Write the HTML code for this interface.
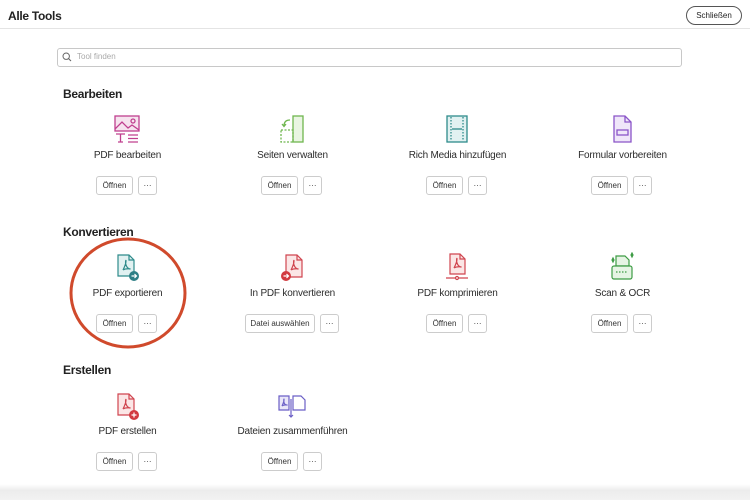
<!DOCTYPE html>
<html><head><meta charset="utf-8"><style>
*{margin:0;padding:0;box-sizing:border-box}
body{width:750px;height:500px;background:#fff;font-family:"Liberation Sans",sans-serif;color:#222;position:relative;overflow:hidden}
.a{position:absolute}
.h{font-weight:bold;font-size:12px;letter-spacing:-0.3px}
.lbl{position:absolute;width:165px;text-align:center;font-size:10px;color:#2c2c2c;letter-spacing:-0.2px}
.btn{position:absolute;height:19px;border:1px solid #ccc;border-radius:3px;font-size:8px;line-height:17px;text-align:center;color:#333;background:#fff}
.ic{position:absolute;width:30px;height:30px}
</style></head><body>
<div class="a h" style="left:8px;top:9px;font-size:12px">Alle Tools</div>
<div class="a" style="left:686px;top:6px;width:56px;height:19px;border:1px solid #555;border-radius:10px;font-size:8px;line-height:17px;text-align:center">Schließen</div>
<div class="a" style="left:0;top:28px;width:750px;height:1px;background:#e4e4e4"></div>
<div class="a" style="left:57px;top:48px;width:625px;height:19px;border:1px solid #c8c8c8;border-radius:3px"></div>
<svg class="a" style="left:62px;top:52px" width="10" height="10" viewBox="0 0 10 10"><circle cx="4.2" cy="4.2" r="3.2" fill="none" stroke="#666" stroke-width="1"/><path d="M6.5 6.5L9 9" stroke="#666" stroke-width="1.1"/></svg>
<div class="a" style="left:77px;top:52px;font-size:8px;color:#aaa">Tool finden</div>

<div class="a h" style="left:63px;top:87px">Bearbeiten</div>
<div class="a h" style="left:63px;top:225px">Konvertieren</div>
<div class="a h" style="left:63px;top:363px">Erstellen</div>

<svg class="ic" style="left:112px;top:114px" viewBox="0 0 30 30" fill="none" stroke="#c0408f" stroke-width="1.3"><rect x="3" y="2" width="24" height="15" fill="#f6e3ee"/><path d="M3 15l7-7 6 6 4-3 7 5"/><circle cx="21" cy="7" r="2"/><path d="M4 20h9M8.5 20v8M6 28h5M16 21h10M16 24.5h10M16 28h10"/></svg>
<svg class="ic" style="left:277px;top:114px" viewBox="0 0 30 30" fill="none" stroke="#6fb64f" stroke-width="1.3"><rect x="16" y="2" width="10" height="26" fill="#e9f5e2"/><rect x="4" y="16" width="12" height="12" stroke-dasharray="2 1.5"/><path d="M13 6c-4 0-6 2-6 6M5 10l2 2.5 2-2.5"/></svg>
<svg class="ic" style="left:442px;top:114px" viewBox="0 0 30 30" fill="none" stroke="#2e8b8b" stroke-width="1.3"><rect x="5" y="2" width="20" height="26" fill="#e1f1f1"/><path d="M9 3v24M21 3v24" stroke-dasharray="1.5 1.5"/><path d="M10 15h10"/></svg>
<svg class="ic" style="left:607px;top:114px" viewBox="0 0 30 30" fill="none" stroke="#8a55c8" stroke-width="1.3"><path d="M7 2h11l6 6v20H7z" fill="#efe6f9"/><path d="M18 2v6h6"/><rect x="10" y="16" width="11" height="5"/></svg>

<div class="lbl" style="left:45px;top:150px">PDF bearbeiten</div>
<div class="lbl" style="left:210px;top:150px">Seiten verwalten</div>
<div class="lbl" style="left:375px;top:150px">Rich Media hinzufügen</div>
<div class="lbl" style="left:540px;top:150px">Formular vorbereiten</div>

<div class="btn" style="left:96px;top:176px;width:37px">Öffnen</div><div class="btn" style="left:138px;top:176px;width:19px">···</div>
<div class="btn" style="left:261px;top:176px;width:37px">Öffnen</div><div class="btn" style="left:303px;top:176px;width:19px">···</div>
<div class="btn" style="left:426px;top:176px;width:37px">Öffnen</div><div class="btn" style="left:468px;top:176px;width:19px">···</div>
<div class="btn" style="left:591px;top:176px;width:37px">Öffnen</div><div class="btn" style="left:633px;top:176px;width:19px">···</div>

<svg class="ic" style="left:112px;top:252px" viewBox="0 0 30 30" fill="none" stroke="#2e8b8b" stroke-width="1.2"><path d="M6 3h11l5 5v16H6z" fill="#e1f1f1"/><path d="M17 3v5h5"/><path d="M11 18c2-4 3-7 3-9s-1 1 0 4 3 4 4 4-4-1-7 1"/><circle cx="22" cy="24" r="5" fill="#2e7f86" stroke="none"/><path d="M19.5 24h4.5M22.5 22l2 2-2 2" stroke="#fff"/></svg>
<svg class="ic" style="left:277px;top:252px" viewBox="0 0 30 30" fill="none" stroke="#d0454f" stroke-width="1.2"><path d="M9 3h11l5 5v17H9z" fill="#fbe6e6"/><path d="M20 3v5h5"/><path d="M14 18c2-4 3-7 3-9s-1 1 0 4 3 4 4 4-4-1-7 1"/><circle cx="9" cy="24" r="5" fill="#d23a3f" stroke="none"/><path d="M6.5 24h4.5M9.5 22l2 2-2 2" stroke="#fff"/></svg>
<svg class="ic" style="left:442px;top:252px" viewBox="0 0 30 30" fill="none" stroke="#d0454f" stroke-width="1.2"><path d="M8 2h10l5 5v15H8z" fill="#fbe6e6"/><path d="M18 2v5h5"/><path d="M12 16c2-4 3-7 3-9s-1 1 0 4 3 4 4 4-4-1-7 1"/><path d="M4 26h22"/><circle cx="15" cy="26" r="1.5" fill="#fff"/></svg>
<svg class="ic" style="left:607px;top:252px" viewBox="0 0 30 30" fill="none" stroke="#3e9c45" stroke-width="1.2"><path d="M9 4h9l4 4v6H9z" fill="#e6f4e4"/><rect x="5" y="14" width="20" height="13" rx="2" fill="#e6f4e4"/><path d="M9 20h12" stroke-dasharray="1.5 1.5"/><path d="M5 8l1-2 1 2-1 2zM24 3l1-2 1 2-1 2z" fill="#3e9c45"/></svg>

<div class="lbl" style="left:45px;top:288px">PDF exportieren</div>
<div class="lbl" style="left:210px;top:288px">In PDF konvertieren</div>
<div class="lbl" style="left:375px;top:288px">PDF komprimieren</div>
<div class="lbl" style="left:540px;top:288px">Scan &amp; OCR</div>

<div class="btn" style="left:96px;top:314px;width:37px">Öffnen</div><div class="btn" style="left:138px;top:314px;width:19px">···</div>
<div class="btn" style="left:245px;top:314px;width:70px">Datei auswählen</div><div class="btn" style="left:320px;top:314px;width:19px">···</div>
<div class="btn" style="left:426px;top:314px;width:37px">Öffnen</div><div class="btn" style="left:468px;top:314px;width:19px">···</div>
<div class="btn" style="left:591px;top:314px;width:37px">Öffnen</div><div class="btn" style="left:633px;top:314px;width:19px">···</div>

<svg class="ic" style="left:112px;top:391px" viewBox="0 0 30 30" fill="none" stroke="#d0454f" stroke-width="1.2"><path d="M6 3h11l5 5v16H6z" fill="#fbe6e6"/><path d="M17 3v5h5"/><path d="M11 18c2-4 3-7 3-9s-1 1 0 4 3 4 4 4-4-1-7 1"/><circle cx="22" cy="24" r="5" fill="#d23a3f" stroke="none"/><path d="M22 21.5v5M19.5 24h5" stroke="#fff"/></svg>
<svg class="ic" style="left:277px;top:391px" viewBox="0 0 30 30" fill="none" stroke="#6b5fc6" stroke-width="1.2"><path d="M2 5h10v14H2z" fill="#e9e6f8"/><path d="M16 5h8l4 4v10H16z"/><path d="M5 15c1.5-3 2-5 2-6.5s-.5 1 0 3 2 2.5 3 2.5-3-.5-5 1"/><path d="M14 8v18M12 24l2 2 2-2"/></svg>

<div class="lbl" style="left:45px;top:426px">PDF erstellen</div>
<div class="lbl" style="left:210px;top:426px">Dateien zusammenführen</div>

<div class="btn" style="left:96px;top:452px;width:37px">Öffnen</div><div class="btn" style="left:138px;top:452px;width:19px">···</div>
<div class="btn" style="left:261px;top:452px;width:37px">Öffnen</div><div class="btn" style="left:303px;top:452px;width:19px">···</div>

<div class="a" style="left:0;top:484px;width:750px;height:16px;background:linear-gradient(#fff,#ececec 40%,#f2f2f2)"></div>

<svg class="a" style="left:0;top:0" width="750" height="500"><ellipse cx="128" cy="293" rx="57" ry="54" fill="none" stroke="#d04a2c" stroke-width="3"/></svg>
</body></html>
